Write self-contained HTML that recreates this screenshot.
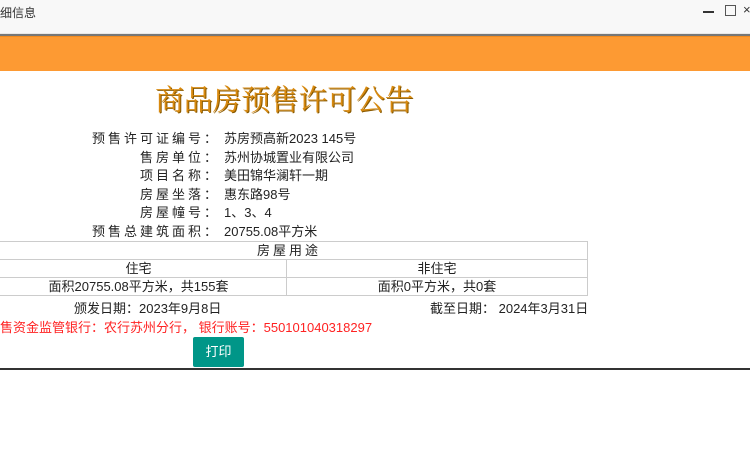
<!DOCTYPE html>
<html><head><meta charset="utf-8"><style>
body{margin:0;width:750px;height:450px;overflow:hidden;background:#fff;font-family:"Liberation Sans","Noto Sans CJK SC",sans-serif;font-size:13px;color:#222;position:relative}
.a{position:absolute;white-space:nowrap}
.tb{position:absolute;left:0;top:0;width:750px;height:33px;background:#f8f8f8;border-bottom:1px solid #e8e8e8}
.row{position:absolute;left:0;width:750px;height:18px;line-height:18px}
.row .l{position:absolute;right:530px;letter-spacing:3px}
.row .v{position:absolute;left:224px}
table{position:absolute;left:-10px;top:241px;width:598px;border-collapse:collapse}
td{border:1px solid #ccc;height:17px;padding:0;text-align:center;line-height:17px;font-size:13px}
</style></head><body>
<div class="tb"></div>
<div class="a" style="left:0;top:4px;font-size:12px;color:#333">细信息</div>
<div class="a" style="left:703px;top:11px;width:11px;height:2px;background:#333"></div>
<div class="a" style="left:725px;top:5px;width:9px;height:9px;border:1px solid #555"></div>
<div class="a" style="left:743px;top:2px;font-size:13px;color:#333">×</div>
<div class="a" style="left:0;top:34px;width:750px;height:2px;background:#777"></div>
<div class="a" style="left:0;top:36px;width:750px;height:34px;background:#fd9a33;border-top:1px solid #f08a20"></div>
<div class="a" style="left:155px;top:79px;font-size:29px;line-height:40px;font-family:'Noto Serif CJK SC',serif;color:#d88a10;text-shadow:1px 1px 0 #8a5a00;letter-spacing:-0.3px">商品房预售许可公告</div>
<div class="row" style="top:130px"><span class="l">预售许可证编号：</span><span class="v">苏房预高新2023 145号</span></div>
<div class="row" style="top:149px"><span class="l">售房单位：</span><span class="v">苏州协城置业有限公司</span></div>
<div class="row" style="top:167px"><span class="l">项目名称：</span><span class="v">美田锦华澜轩一期</span></div>
<div class="row" style="top:186px"><span class="l">房屋坐落：</span><span class="v">惠东路98号</span></div>
<div class="row" style="top:204px"><span class="l">房屋幢号：</span><span class="v">1、3、4</span></div>
<div class="row" style="top:223px"><span class="l">预售总建筑面积：</span><span class="v">20755.08平方米</span></div>
<table>
<tr><td colspan="2" style="letter-spacing:3px">房屋用途</td></tr>
<tr><td style="width:295px">住宅</td><td>非住宅</td></tr>
<tr><td>面积20755.08平方米，共155套</td><td>面积0平方米，共0套</td></tr>
</table>
<div class="a" style="left:74px;top:298px">颁发日期：2023年9月8日</div>
<div class="a" style="left:430px;top:298px">截至日期：&nbsp;2024年3月31日</div>
<div class="a" style="left:0;top:317px;color:#f22">售资金监管银行：农行苏州分行，&nbsp;银行账号：550101040318297</div>
<div class="a" style="left:193px;top:337px;width:51px;height:30px;background:#009688;color:#fff;text-align:center;line-height:30px;border-radius:2px">打印</div>
<div class="a" style="left:0;top:368px;width:750px;height:2px;background:#333"></div>
</body></html>
